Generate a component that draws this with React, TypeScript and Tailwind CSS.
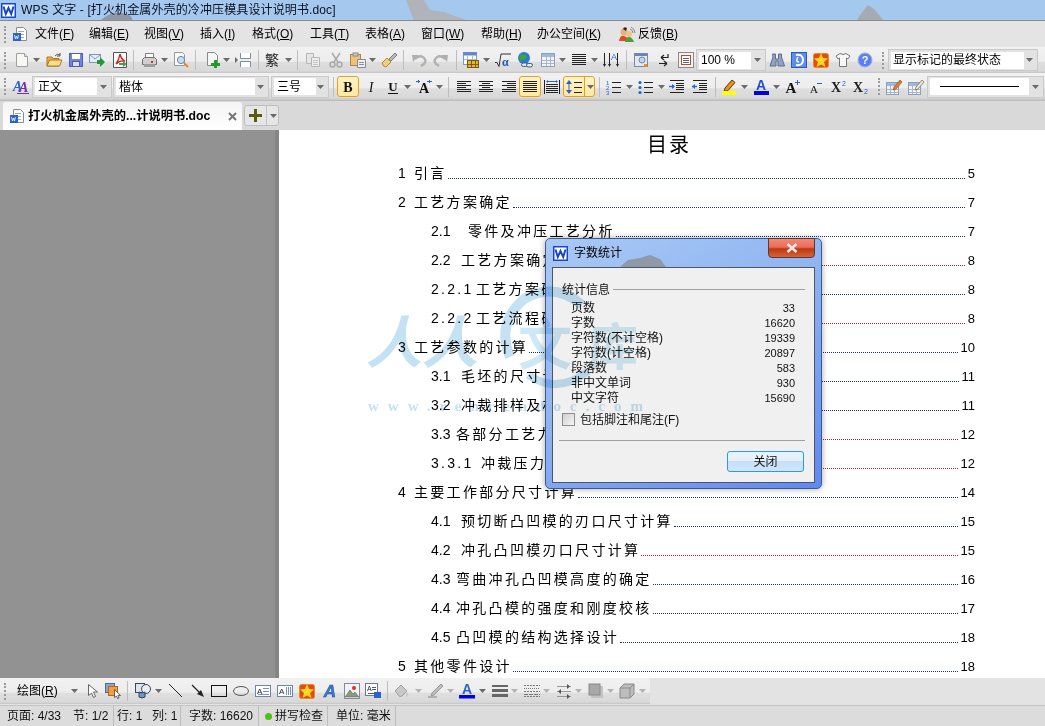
import React from "react";

type SvgProps = { className?: string; w?: number; h?: number; children?: React.ReactNode };

const Svg = ({ className = "", w = 16, h = 16, children }: SvgProps) => (
  <svg width={w} height={h} viewBox={`0 0 ${w} ${h}`} className={`shrink-0 block overflow-visible ${className}`}>
    {children}
  </svg>
);

type IconProps = { className?: string };

const Arrow = ({ className = "" }: IconProps) => (
  <Svg w={7} h={4} className={className}>
    <polygon points="0,0 7,0 3.5,4" fill="#6b6b6b" />
  </Svg>
);
const ArrowOff = ({ className = "" }: IconProps) => (
  <Svg w={7} h={4} className={className}>
    <polygon points="0,0 7,0 3.5,4" fill="#b4b4b4" />
  </Svg>
);
const Grip = ({ className = "" }: IconProps) => (
  <div className={`w-[2px] h-[17px] shrink-0 border-l-2 border-dotted border-[#9a9a9a] ${className}`} />
);
const Sep = ({ className = "" }: IconProps) => (
  <div className={`w-px h-[20px] shrink-0 bg-[#bdbdbd] ${className}`} />
);

const WpsLogo = ({ className = "" }: IconProps) => (
  <Svg w={15} h={15} className={className}>
    <rect x="0" y="0" width="15" height="15" fill="#1848c8" />
    <rect x="1.5" y="1.5" width="12" height="12" fill="#fff" />
    <polyline points="2.5,3.5 4.8,11 7.5,5 10.2,11 12.5,3.5" fill="none" stroke="#1848c8" strokeWidth="2" />
  </Svg>
);

const DocBlue = ({ className = "" }: IconProps) => (
  <Svg className={className}>
    <path d="M4.5 1.5h7l3 3v10h-10z" fill="#fff" stroke="#8c8c8c" />
    <path d="M6 5.5h6M6 8.5h6M6 11.5h6" stroke="#9aa8c0" />
    <rect x="1" y="7" width="8" height="8" fill="#2a62d0" />
    <path d="M2.5 9l1 4 1-3 1 3 1-4" stroke="#fff" fill="none" strokeWidth="0.8" />
  </Svg>
);
const IconNew = ({ className = "" }: IconProps) => (
  <Svg className={className}>
    <path d="M2.5 1.5h8l3 3v10h-11z" fill="#f6f6f2" stroke="#a0a0a0" />
    <path d="M10.5 1.5v3h3" fill="#ddd" stroke="#a0a0a0" />
  </Svg>
);
const IconOpen = ({ className = "" }: IconProps) => (
  <Svg className={className}>
    <path d="M1 5h5l1 1.5h6V14H1z" fill="#e9b14c" stroke="#a87a24" />
    <path d="M3.5 8H16l-2.5 6H1z" fill="#fbdc8c" stroke="#a87a24" />
    <path d="M9 4q2-3 5-1" stroke="#555" fill="none" />
    <path d="M14 1v3h-3" stroke="#555" fill="none" />
  </Svg>
);
const IconSave = ({ className = "" }: IconProps) => (
  <Svg className={className}>
    <rect x="1.5" y="1.5" width="13" height="13" fill="#6f86d8" stroke="#4a5fb0" />
    <rect x="4" y="2" width="8" height="5" fill="#fff" />
    <rect x="4.5" y="9.5" width="7" height="5" fill="#d8dcea" stroke="#4a5fb0" />
  </Svg>
);
const IconMail = ({ className = "" }: IconProps) => (
  <Svg className={className}>
    <rect x="0.5" y="2.5" width="11" height="8" fill="#e6eefa" stroke="#7f96c0" />
    <path d="M1 3l5 4 5-4" fill="none" stroke="#7f96c0" />
    <polygon points="8,8 11,8 11,5 16,10 11,15 11,12 8,12" fill="#1f9a2c" />
  </Svg>
);
const IconPdf = ({ className = "" }: IconProps) => (
  <Svg className={className}>
    <path d="M1.5 0.5h13v15h-13z" fill="#fff" stroke="#555" />
    <path d="M8 2q1 5 5 7-5-1-9 3 3-4 4-10z" fill="none" stroke="#d81818" strokeWidth="1.3" />
    <polygon points="7,11 11,11 11,9 15,12 11,15 11,13 7,13" fill="#40a050" />
  </Svg>
);
const IconPrint = ({ className = "" }: IconProps) => (
  <Svg className={className}>
    <path d="M4.5 1.5h8v5h-8z" fill="#fff" stroke="#808080" />
    <path d="M1.5 7.5l2-2h10l2 2v5h-14z" fill="#cfcfcf" stroke="#707070" />
    <rect x="3" y="12" width="11" height="3" fill="#9c9c9c" />
    <rect x="10" y="9" width="2" height="2" fill="#d03030" />
  </Svg>
);
const IconPreview = ({ className = "" }: IconProps) => (
  <Svg className={className}>
    <path d="M1.5 0.5h8l2 2v11h-10z" fill="#fafafa" stroke="#9a9a9a" />
    <circle cx="8" cy="8" r="3.6" fill="#c4e0f4" stroke="#6a88a8" />
    <path d="M11 11l4 4" stroke="#d89018" strokeWidth="2" />
  </Svg>
);
const IconNewPlus = ({ className = "" }: IconProps) => (
  <Svg className={className}>
    <path d="M2.5 0.5h7l3 3v10h-10z" fill="#f6f6f2" stroke="#8a8a8a" />
    <path d="M9 8h3v3h3v3h-3v2H9v-2H6v-3h3z" fill="#1f9a2c" />
  </Svg>
);
const IconSplit = ({ className = "" }: IconProps) => (
  <Svg className={className}>
    <path d="M5.5 1v5.500h10V1M5.5 15v-5.500h10V15" fill="#fff" stroke="#7a8ea8" />
    <polygon points="0,5 3,8 0,11" fill="#666" />
  </Svg>
);
const IconCopy = ({ className = "" }: IconProps) => (
  <Svg className={className}>
    <path d="M1.5 1.5h7v10h-7z" fill="#e6e6e6" stroke="#b6b6b6" />
    <path d="M6.5 5.5h8v9h-8z" fill="#eee" stroke="#b6b6b6" />
    <path d="M8 8.500h5M8 10.500h5M8 12.500h5" stroke="#c4c4c4" />
  </Svg>
);
const IconCut = ({ className = "" }: IconProps) => (
  <Svg className={className}>
    <path d="M4 1l6 9M12 1L6 10" stroke="#a8a8a8" strokeWidth="1.5" />
    <circle cx="4.5" cy="12.5" r="2.5" fill="none" stroke="#a8a8a8" strokeWidth="1.4" />
    <circle cx="11.5" cy="12.5" r="2.5" fill="none" stroke="#a8a8a8" strokeWidth="1.4" />
  </Svg>
);
const IconPaste = ({ className = "" }: IconProps) => (
  <Svg className={className}>
    <rect x="0.5" y="2.5" width="10" height="11" fill="#eec27a" stroke="#a88850" />
    <rect x="3" y="1" width="5" height="3" fill="#ccc" stroke="#888" />
    <path d="M7.5 7.5h8v8h-8z" fill="#eee" stroke="#8a8a8a" />
    <path d="M9 10.500h5M9 12.500h5" stroke="#7a90b8" />
  </Svg>
);
const IconBrush = ({ className = "" }: IconProps) => (
  <Svg className={className}>
    <path d="M1 11l5-5 4 4-5 5q-3 0-4-4z" fill="#f0cf80" stroke="#b08a40" />
    <path d="M8 7l6-6 2 2-6 6z" fill="#b8b8b8" stroke="#808080" />
  </Svg>
);
const IconUndo = ({ className = "" }: IconProps) => (
  <Svg className={className}>
    <path d="M4 7q5-5 9-1t-3 8" fill="none" stroke="#b0b0b0" strokeWidth="2.4" />
    <polygon points="1,3 8,3 2,10" fill="#b0b0b0" />
  </Svg>
);
const IconRedo = ({ className = "" }: IconProps) => (
  <Svg className={className}>
    <path d="M12 7q-5-5-9-1t3 8" fill="none" stroke="#b0b0b0" strokeWidth="2.4" />
    <polygon points="15,3 8,3 14,10" fill="#b0b0b0" />
  </Svg>
);
const IconTableY = ({ className = "" }: IconProps) => (
  <Svg w={16} h={16} className={className}>
    <rect x="0.5" y="0.5" width="13" height="12" fill="#fff" stroke="#7898c8" />
    <rect x="0.5" y="0.5" width="13" height="3" fill="#5f86c8" />
    <path d="M4.5 4v8M9.500 4v8M1 7.500h12" stroke="#a8bcd8" />
    <rect x="4.5" y="8.5" width="11" height="7" fill="#e8b820" stroke="#7a5a10" />
    <path d="M8.500 9v6M12.500 9v6M5 12.500h10" stroke="#7a5a10" />
  </Svg>
);
const IconSqrt = ({ className = "" }: IconProps) => (
  <Svg className={className}>
    <path d="M0 10.500h2l2 4 2-12.500h10" fill="none" stroke="#333" />
    <text x="7" y="14" fontSize="12" fontWeight="700" fill="#1e5ab0" fontFamily="Liberation Serif">α</text>
  </Svg>
);
const IconGlobe = ({ className = "" }: IconProps) => (
  <Svg className={className}>
    <circle cx="7" cy="6" r="6" fill="#2f78d0" />
    <path d="M3 2q3 2 5 0l2 3-3 3-2-1-1 3-2-4z" fill="#38a838" />
    <rect x="4.5" y="11" width="6" height="3.4" rx="1.7" fill="#e8eef8" stroke="#3a5a90" />
    <rect x="9.5" y="11.5" width="6" height="3.4" rx="1.7" fill="#e8eef8" stroke="#3a5a90" />
  </Svg>
);
const IconTable = ({ className = "" }: IconProps) => (
  <Svg className={className}>
    <rect x="1.5" y="1.5" width="13" height="13" fill="#f4f4f4" stroke="#8aa0c0" />
    <rect x="2" y="2" width="12" height="3" fill="#a0b8dc" />
    <path d="M6.500 2v12M10.500 2v12M2 8.500h12M2 11.500h12" stroke="#a8b4c8" />
  </Svg>
);
const IconCols = ({ className = "" }: IconProps) => (
  <Svg className={className}>
    <path d="M1 2.500h14M1 4.500h14M1 6.500h14M1 8.500h14M1 10.500h14M1 12.500h14" stroke="#222" />
  </Svg>
);
const IconDist = ({ className = "" }: IconProps) => (
  <Svg className={className}>
    <path d="M1.500 1v12M6.500 1v12M14.500 1v12" stroke="#222" />
    <polygon points="0,12 3,12 1.5,15" fill="#222" />
    <polygon points="5,12 8,12 6.5,15" fill="#222" />
    <polygon points="13,12 16,12 14.5,15" fill="#222" />
    <text x="8" y="8" fontSize="9" fill="#2a62d0" fontFamily="Liberation Sans">A</text>
  </Svg>
);
const IconReview = ({ className = "" }: IconProps) => (
  <Svg className={className}>
    <rect x="1.5" y="1.5" width="13" height="13" fill="#e4e8f0" stroke="#7a8aa0" />
    <rect x="2" y="2" width="12" height="2" fill="#5f86c8" />
    <circle cx="9" cy="8" r="3" fill="#bcd4ec" stroke="#7a8aa0" />
    <rect x="11" y="12" width="3" height="3" fill="#e89018" />
  </Svg>
);
const IconEnter = ({ className = "" }: IconProps) => (
  <Svg className={className}>
    <path d="M12 2v3.500H5M5 5.500l3-2.500M5 5.500l3 2.500M3 11.500h8M11 11.500l-3-2.500M11 11.500l-3 2.500" fill="none" stroke="#222" strokeWidth="1.2" />
  </Svg>
);
const IconFrame = ({ className = "" }: IconProps) => (
  <Svg className={className}>
    <rect x="0.5" y="0.5" width="15" height="15" fill="#f2f2f2" stroke="#8a8a8a" />
    <rect x="3.5" y="3.5" width="9" height="9" fill="#fff" stroke="#b05030" />
    <path d="M5 6.500h6M5 8.500h6M5 10.500h6" stroke="#666" />
  </Svg>
);
const IconBinoc = ({ className = "" }: IconProps) => (
  <Svg className={className}>
    <path d="M3.5 2h3v5h3V2h3v3l3 9H9V9H7v5H1l3-9z" fill="#8ea4c4" stroke="#5f6f8a" />
  </Svg>
);
const IconBlue = ({ className = "" }: IconProps) => (
  <Svg className={className}>
    <rect x="0.5" y="0.5" width="15" height="15" fill="#5f8ee8" stroke="#2a5ac0" />
    <path d="M5 3q7-1 7 5t-7 5" fill="none" stroke="#fff" strokeWidth="2" />
    <path d="M7 5q-3 5 1 5" fill="none" stroke="#fff" strokeWidth="1.4" />
  </Svg>
);
const IconStar = ({ className = "" }: IconProps) => (
  <Svg className={className}>
    <rect x="0.5" y="1.5" width="15" height="14" rx="2" fill="#e84818" stroke="#e09020" />
    <polygon points="8,1 10,6 15,6.5 11,10 12.5,15 8,12.5 3.5,15 5,10 1,6.5 6,6" fill="#ffd820" />
  </Svg>
);
const IconShirt = ({ className = "" }: IconProps) => (
  <Svg className={className}>
    <path d="M5 1.5L1 4l2 3 1.5-1v8.5h7V6L13 7l2-3-4-2.500q-3 2-6 0z" fill="#f8f8f8" stroke="#777" />
  </Svg>
);
const IconHelp = ({ className = "" }: IconProps) => (
  <Svg className={className}>
    <circle cx="8" cy="8" r="7" fill="#5b7ef0" stroke="#9ab0f0" />
    <text x="8" y="12" fontSize="11" fontWeight="700" textAnchor="middle" fill="#fff" fontFamily="Liberation Sans">?</text>
  </Svg>
);

const IconStyle = ({ className = "" }: IconProps) => (
  <Svg className={className}>
    <text x="0" y="12" fontSize="14" fontStyle="italic" fontWeight="700" fill="#2a62d0" fontFamily="Liberation Serif">A</text>
    <text x="6" y="13" fontSize="14" fontStyle="italic" fontWeight="700" fill="#7030a0" fontFamily="Liberation Serif">A</text>
    <rect x="4" y="14" width="12" height="1" fill="#7030a0" />
  </Svg>
);
const Letter = ({ className = "", ch, italic, bold }: IconProps & { ch: string; italic?: boolean; bold?: boolean }) => (
  <Svg className={className}>
    <text x="8" y="13" fontSize="14" textAnchor="middle" fontWeight={bold ? 700 : 400} fontStyle={italic ? "italic" : "normal"} fill="#111" fontFamily="Liberation Serif">{ch}</text>
  </Svg>
);
const IconU = ({ className = "" }: IconProps) => (
  <Svg className={className}>
    <text x="8" y="12" fontSize="13" textAnchor="middle" fontWeight="700" fill="#111" fontFamily="Liberation Serif">U</text>
    <rect x="3" y="14" width="10" height="1" fill="#111" />
  </Svg>
);
const IconAHeight = ({ className = "" }: IconProps) => (
  <Svg className={className}>
    <text x="8" y="14" fontSize="14" textAnchor="middle" fontWeight="700" fill="#111" fontFamily="Liberation Serif">A</text>
    <path d="M0 2.500h4M11 2.500h5" stroke="#2a62d0" />
    <path d="M2.500 1v3M13.500 1v3" stroke="#2a62d0" />
  </Svg>
);
const Lines = ({ className = "", rows }: IconProps & { rows: [number, number][] }) => (
  <Svg className={className}>
    {rows.map(([x, w], i) => (
      <rect key={i} x={x} y={2 + i * 2} width={w} height={1} fill="#222" />
    ))}
  </Svg>
);
const left: [number, number][] = [[1, 14], [1, 9], [1, 14], [1, 9], [1, 14], [1, 14]];
const center: [number, number][] = [[1, 14], [4, 8], [1, 14], [4, 8], [1, 14], [1, 14]];
const right: [number, number][] = [[1, 14], [6, 9], [1, 14], [6, 9], [1, 14], [1, 14]];
const full: [number, number][] = [[1, 14], [1, 14], [1, 14], [1, 14], [1, 14], [1, 14]];

const IconDistH = ({ className = "" }: IconProps) => (
  <Svg className={className}>
    <path d="M0.500 1v14M15.500 1v14" stroke="#222" />
    <path d="M2 2.500l2-1.500v3zM14 2.500l-2-1.500v3z" fill="#2a62d0" />
    <path d="M4 2.500h8" stroke="#2a62d0" />
    <path d="M2 5.500h12M2 7.500h12M2 9.500h12M2 11.500h12M2 13.500h12" stroke="#222" />
  </Svg>
);
const IconSpacing = ({ className = "" }: IconProps) => (
  <Svg className={className}>
    <path d="M3 2v12" stroke="#2a62d0" />
    <polygon points="0,5 6,5 3,1" fill="#2a62d0" />
    <polygon points="0,11 6,11 3,15" fill="#2a62d0" />
    <path d="M8 3.500h8M8 8.500h8M8 13.500h8" stroke="#222" />
  </Svg>
);
const IconList = ({ className = "" }: IconProps) => (
  <Svg className={className}>
    <text x="0" y="6" fontSize="6" fill="#2a62d0" fontFamily="Liberation Sans">1</text>
    <text x="0" y="11" fontSize="6" fill="#2a62d0" fontFamily="Liberation Sans">2</text>
    <text x="0" y="16" fontSize="6" fill="#2a62d0" fontFamily="Liberation Sans">3</text>
    <path d="M6 3.500h9M6 8.500h9M6 13.500h9" stroke="#222" />
  </Svg>
);
const IconBullets = ({ className = "" }: IconProps) => (
  <Svg className={className}>
    <circle cx="2" cy="3.500" r="1.6" fill="#2a62d0" />
    <circle cx="2" cy="8.500" r="1.6" fill="#2a62d0" />
    <circle cx="2" cy="13.500" r="1.6" fill="#2a62d0" />
    <path d="M6 3.500h9M6 8.500h9M6 13.500h9" stroke="#222" />
  </Svg>
);
const IconIndent = ({ className = "", flip }: IconProps & { flip?: boolean }) => (
  <Svg className={className}>
    <path d="M1 1.500h14M7 4.500h8M7 6.500h8M7 8.500h8M7 10.500h8M1 13.500h14" stroke="#222" />
    <path d="M0 7.500h5" stroke="#2a62d0" strokeWidth="1.4" />
    {flip ? <polygon points="6,7.500 3,5 3,10" fill="#2a62d0" /> : <polygon points="0,7.500 3,5 3,10" fill="#2a62d0" />}
  </Svg>
);
const IconHighlight = ({ className = "" }: IconProps) => (
  <Svg className={className}>
    <path d="M4 9l7-8 3 2.500-7 8-4 1z" fill="#e89018" stroke="#603808" />
    <rect x="1" y="12" width="14" height="4" fill="#ffff00" />
  </Svg>
);
const IconAColor = ({ className = "" }: IconProps) => (
  <Svg className={className}>
    <text x="8" y="11" fontSize="14" textAnchor="middle" fontWeight="700" fill="#1e50d0" fontFamily="Liberation Sans">A</text>
    <rect x="1" y="12" width="15" height="4" fill="#0000e0" />
  </Svg>
);
const IconAGrow = ({ className = "", up }: IconProps & { up?: boolean }) => (
  <Svg className={className}>
    <text x="6" y="14" fontSize={up ? 15 : 11} textAnchor="middle" fontWeight={up ? 700 : 400} fill="#111" fontFamily="Liberation Serif">A</text>
    <path d={up ? "M10 3.500h5M12.500 1v5" : "M9 4.500h5"} stroke="#2a62d0" />
  </Svg>
);
const IconX = ({ className = "", sub }: IconProps & { sub?: boolean }) => (
  <Svg className={className}>
    <text x="6" y="13" fontSize="14" textAnchor="middle" fontWeight="700" fill="#222" fontFamily="Liberation Serif">X</text>
    <text x="12" y={sub ? 15 : 7} fontSize="7" fill="#2a62d0" fontFamily="Liberation Sans">2</text>
  </Svg>
);
const IconEditTable = ({ className = "", pen }: IconProps & { pen?: string }) => (
  <Svg className={className}>
    <rect x="0.5" y="3.5" width="12" height="12" fill="#f4f4f4" stroke="#8aa0c0" />
    <rect x="1" y="4" width="11" height="3" fill="#a0b8dc" />
    <path d="M4.500 4v11M8.500 4v11M1 10.500h11M1 13.500h11" stroke="#a8b4c8" />
    <path d="M8 8l6-7 2 2-6 7-3 1z" fill={pen} stroke="#806030" strokeWidth="0.7" />
  </Svg>
);

const IconCursor = ({ className = "" }: IconProps) => (
  <Svg className={className}>
    <path d="M4.500 1.500v11l3-2.500 2 4.500 2-1-2-4.500h4z" fill="#fff" stroke="#666" />
  </Svg>
);
const IconSelect = ({ className = "" }: IconProps) => (
  <Svg className={className}>
    <rect x="0.500" y="0.500" width="9" height="9" fill="#8ea4c4" stroke="#5a6a8a" />
    <rect x="3.500" y="3.500" width="9" height="9" fill="#f0a040" stroke="#a86a20" />
    <path d="M9.500 6.500v8l2-1.500 1 2.500 1.500-.5-1-2.500h2.500z" fill="#fff" stroke="#444" strokeWidth="0.8" />
  </Svg>
);
const IconShapes = ({ className = "" }: IconProps) => (
  <Svg className={className}>
    <rect x="0.500" y="0.500" width="9" height="9" fill="#dce4f0" stroke="#445" />
    <circle cx="11" cy="6" r="4.500" fill="#eaeef4" stroke="#445" />
    <path d="M4 9v5q3 2 6 0V9q-3 2-6 0z" fill="#6a96d8" stroke="#345" />
  </Svg>
);
const IconLine = ({ className = "" }: IconProps) => (
  <Svg className={className}>
    <path d="M2 1l13 13" stroke="#222" />
  </Svg>
);
const IconArrowLine = ({ className = "" }: IconProps) => (
  <Svg className={className}>
    <path d="M2 2l9 9" stroke="#222" strokeWidth="1.2" />
    <polygon points="14,14 7,11 11,7" fill="#222" />
  </Svg>
);
const IconRect = ({ className = "" }: IconProps) => (
  <Svg className={className}>
    <rect x="0.500" y="2.500" width="15" height="11" fill="none" stroke="#111" />
  </Svg>
);
const IconOval = ({ className = "" }: IconProps) => (
  <Svg className={className}>
    <ellipse cx="8" cy="8" rx="7.500" ry="4.500" fill="none" stroke="#555" />
  </Svg>
);
const IconTextBox = ({ className = "", bars }: IconProps & { bars?: boolean }) => (
  <Svg className={className}>
    <rect x="0.500" y="2.500" width="15" height="11" fill="#fff" stroke="#6a86b0" />
    <text x="2" y="11" fontSize="8" fill="#222" fontFamily="Liberation Sans">A</text>
    {bars ? (
      <path d="M9.500 4v8M11.500 4v8M13.500 4v8" stroke="#7a90b8" />
    ) : (
      <path d="M8 5.500h6M8 8.500h6M3 11.500h11" stroke="#7a90b8" />
    )}
  </Svg>
);
const IconWordArt = ({ className = "" }: IconProps) => (
  <Svg className={className}>
    <text x="8" y="14" fontSize="17" fontStyle="italic" textAnchor="middle" fontWeight="700" fill="#3a78d8" stroke="#1e4a98" strokeWidth="0.5" fontFamily="Liberation Sans">A</text>
  </Svg>
);
const IconPic = ({ className = "" }: IconProps) => (
  <Svg className={className}>
    <rect x="0.500" y="0.500" width="15" height="15" fill="#f0f4fa" stroke="#889" />
    <circle cx="10" cy="5" r="2" fill="#e03020" />
    <path d="M1 14l5-7 3 4 2-2 4 5z" fill="#8a9a78" stroke="#556" strokeWidth="0.5" />
  </Svg>
);
const IconClip = ({ className = "" }: IconProps) => (
  <Svg className={className}>
    <rect x="0.500" y="0.500" width="12" height="12" fill="#fff" stroke="#6a7a98" />
    <text x="2" y="8" fontSize="7" fill="#222" fontFamily="Liberation Sans">A</text>
    <path d="M7 4.500h4M7 6.500h4M3 10.500h8" stroke="#556" />
    <rect x="9" y="9" width="7" height="6" fill="#2a62d0" />
  </Svg>
);
const IconFill = ({ className = "" }: IconProps) => (
  <Svg className={className}>
    <path d="M2 8l6-6 6 6-5 5q-2 1-3 0z" fill="#c8c8c8" stroke="#a0a0a0" />
    <path d="M14 9q2 3 0 5-2-2 0-5z" fill="#c8c8c8" />
  </Svg>
);
const IconPen = ({ className = "" }: IconProps) => (
  <Svg className={className}>
    <path d="M5 10l9-9 2 2-9 9-3 1z" fill="#bdbdbd" stroke="#9a9a9a" />
    <path d="M1 14h9" stroke="#b0b0b0" strokeWidth="2" />
  </Svg>
);
const IconALine = ({ className = "" }: IconProps) => (
  <Svg className={className}>
    <text x="8" y="11" fontSize="14" textAnchor="middle" fontWeight="700" fill="#2a62d0" fontFamily="Liberation Sans">A</text>
    <rect x="0" y="12" width="16" height="3.500" fill="#0000e0" />
  </Svg>
);
const IconLineStyle = ({ className = "" }: IconProps) => (
  <Svg className={className}>
    <rect x="0" y="2" width="16" height="2" fill="#666" />
    <rect x="0" y="6" width="16" height="3" fill="#666" />
    <rect x="0" y="11" width="16" height="3" fill="#666" />
  </Svg>
);
const IconDash = ({ className = "" }: IconProps) => (
  <Svg className={className}>
    <path d="M0 2.500h16M0 8.500h16M0 13.500h16" stroke="#777" strokeDasharray="2 1" />
    <path d="M0 5.500h16" stroke="#777" strokeDasharray="1 1" />
    <path d="M0 11.500h16" stroke="#777" strokeDasharray="4 1" />
  </Svg>
);
const IconArrows = ({ className = "" }: IconProps) => (
  <Svg className={className}>
    <path d="M1 3.500h14M1 8.500h14M1 13.500h14" stroke="#999" />
    <polygon points="11,1 14,3.500 11,6" fill="#555" />
    <polygon points="5,6 2,8.500 5,11" fill="#555" />
    <polygon points="11,11 14,13.500 11,16" fill="#555" />
  </Svg>
);
const IconShadow = ({ className = "" }: IconProps) => (
  <Svg className={className}>
    <rect x="3" y="3" width="12" height="12" fill="#c4c4c4" />
    <rect x="1" y="1" width="11" height="11" fill="#a8a8a8" stroke="#8a8a8a" />
  </Svg>
);
const Icon3d = ({ className = "" }: IconProps) => (
  <Svg className={className}>
    <path d="M1 5l4-4h10v10l-4 4H1z" fill="#bdbdbd" stroke="#8a8a8a" />
    <path d="M1 5h10v10M11 5l4-4" fill="none" stroke="#8a8a8a" />
  </Svg>
);

const Combo = ({ className = "", inner, children }: IconProps & { inner: string; children?: React.ReactNode }) => (
  <div className={`shrink-0 h-[22px] border border-[#c9c9c9] bg-[#e2e2e2] flex items-center ${className}`}>
    <div className={`h-[17px] ml-[2px] bg-white flex items-center overflow-hidden whitespace-nowrap text-[12px] text-black ${inner}`}>
      {children}
    </div>
    <Arrow className="ml-auto mr-[4px]" />
  </div>
);

const barBg =
  "bg-[linear-gradient(#f1f1f1_0%,#ededed_55%,#dedede_58%,#d9d9d9_92%,#c4c4c4_100%)]";

const menus = [
  { label: "文件", key: "F", cls: "w-[54px]" },
  { label: "编辑", key: "E", cls: "w-[55px]" },
  { label: "视图", key: "V", cls: "w-[56px]" },
  { label: "插入", key: "I", cls: "w-[52px]" },
  { label: "格式", key: "O", cls: "w-[58px]" },
  { label: "工具", key: "T", cls: "w-[55px]" },
  { label: "表格", key: "A", cls: "w-[56px]" },
  { label: "窗口", key: "W", cls: "w-[60px]" },
  { label: "帮助", key: "H", cls: "w-[56px]" },
  { label: "办公空间", key: "K", cls: "w-[83px]" },
];

const blue = "border-[#1e2f70]";
const red = "border-[#b02020]";
const wide = "tracking-[2.300px]";
const narrow = "tracking-normal";

const toc = [
  { num: "1", text: "引言", page: "5", sub: false, numCls: "w-[16px]", track: narrow, line: blue },
  { num: "2", text: "工艺方案确定", page: "7", sub: false, numCls: "w-[16px]", track: narrow, line: blue },
  { num: "2.1", text: "零件及冲压工艺分析", page: "7", sub: true, numCls: "w-[37px]", track: narrow, line: blue },
  { num: "2.2", text: "工艺方案确定", page: "8", sub: true, numCls: "w-[30px]", track: narrow, line: red },
  { num: "2.2.1", text: "工艺方案确定", page: "8", sub: true, numCls: "w-[45px]", track: wide, line: blue },
  { num: "2.2.2", text: "工艺流程确定", page: "8", sub: true, numCls: "w-[45px]", track: wide, line: red },
  { num: "3", text: "工艺参数的计算", page: "10", sub: false, numCls: "w-[16px]", track: narrow, line: blue },
  { num: "3.1", text: "毛坯的尺寸计算", page: "11", sub: true, numCls: "w-[30px]", track: narrow, line: blue },
  { num: "3.2", text: "冲裁排样及材料利用率", page: "11", sub: true, numCls: "w-[30px]", track: narrow, line: blue },
  { num: "3.3", text: "各部分工艺力的计算", page: "12", sub: true, numCls: "w-[25px]", track: narrow, line: red },
  { num: "3.3.1", text: "冲裁压力的计算", page: "12", sub: true, numCls: "w-[50px]", track: wide, line: red },
  { num: "4", text: "主要工作部分尺寸计算", page: "14", sub: false, numCls: "w-[16px]", track: narrow, line: blue },
  { num: "4.1", text: "预切断凸凹模的刃口尺寸计算", page: "15", sub: true, numCls: "w-[30px]", track: narrow, line: blue },
  { num: "4.2", text: "冲孔凸凹模刃口尺寸计算", page: "15", sub: true, numCls: "w-[30px]", track: narrow, line: red },
  { num: "4.3", text: "弯曲冲孔凸凹模高度的确定", page: "16", sub: true, numCls: "w-[25px]", track: narrow, line: blue },
  { num: "4.4", text: "冲孔凸模的强度和刚度校核", page: "17", sub: true, numCls: "w-[25px]", track: narrow, line: blue },
  { num: "4.5", text: "凸凹模的结构选择设计", page: "18", sub: true, numCls: "w-[25px]", track: narrow, line: blue },
  { num: "5", text: "其他零件设计", page: "18", sub: false, numCls: "w-[16px]", track: narrow, line: blue },
];

const stats = [
  ["页数", "33"],
  ["字数", "16620"],
  ["字符数(不计空格)", "19339"],
  ["字符数(计空格)", "20897"],
  ["段落数", "583"],
  ["非中文单词", "930"],
  ["中文字符", "15690"],
];

const WordCountDialog = () => (
  <div className="absolute left-[545px] top-[238px] w-[277px] h-[251px] rounded-[5px] border border-[#3c5a8e] bg-[linear-gradient(150deg,#a9c9f5_0%,#8fb4f2_45%,#5f88f2_100%)] flex flex-col shadow-[0_0_6px_rgba(0,0,0,0.35)]">
    <div className="h-[28px] shrink-0 flex items-center pl-[7px] relative">
      <WpsLogo />
      <span className="ml-[6px] text-[12px] text-black">字数统计</span>
      <svg width="46" height="12" viewBox="0 0 46 12" className="absolute left-[74px] bottom-0">
        <path d="M0 12l8-7 12-2 10-3 10 4 6 8z" fill="#8f99a8" />
      </svg>
      <div className="absolute right-[6px] -top-px w-[47px] h-[20px] rounded-b-[4px] border border-[#5a3a34] bg-[linear-gradient(#f08a78_0%,#ee6a58_45%,#b83a10_55%,#d8623a_100%)] flex items-center justify-center">
        <svg width="12" height="10" viewBox="0 0 12 10">
          <path d="M1.500 1l9 8M10.500 1l-9 8" stroke="#e8e8e8" strokeWidth="2.600" />
        </svg>
      </div>
    </div>
    <div className="ml-[6px] w-[263px] h-[216px] shrink-0 border border-[#50565e] bg-[#f0f0f0] pl-[9px] pt-[14px] flex flex-col text-[12px] text-[#111]">
      <div className="flex items-center h-[15px]">
        <span>统计信息</span>
        <div className="ml-[3px] w-[192px] h-px bg-[#a0a0a0]" />
      </div>
      <div className="mt-[4px] pl-[9px] w-[233px] flex flex-col">
        {stats.map(([k, v]) => (
          <div key={k} className="h-[15px] flex items-center justify-between leading-[15px]">
            <span>{k}</span>
            <span className="text-[11px]">{v}</span>
          </div>
        ))}
      </div>
      <div className="mt-[7px] flex items-center h-[13px]">
        <div className="w-[13px] h-[13px] border border-[#8e8e8e] bg-[linear-gradient(135deg,#d0d0d0,#f6f6f6)]" />
        <span className="ml-[5px]">包括脚注和尾注(F)</span>
      </div>
      <div className="mt-[14px] -ml-[3px] w-[246px] h-px bg-[#a0a0a0]" />
      <div className="mt-[10px] ml-[165px] w-[77px] h-[21px] rounded-[3px] border border-[#2c9ae0] bg-[linear-gradient(#e8f2fb_0%,#e4f0fa_45%,#c4e0f8_50%,#cfe6fa_100%)] flex items-center justify-center text-[12px]">
        关闭
      </div>
    </div>
  </div>
);

const Watermark = () => (
  <svg
    width="340"
    height="140"
    viewBox="0 0 340 140"
    className="absolute left-[360px] top-[283px] pointer-events-none mix-blend-multiply"
  >
    <text x="6" y="80" fontSize="56" fontStyle="italic" fontWeight="700" fill="#c4e2f3" className="font-['Noto_Sans_CJK_SC',sans-serif]">人人</text>
    <path d="M150 74q-14-34 14-58 30-18 58 6" fill="none" stroke="#c4e2f3" strokeWidth="10" />
    <path d="M168 92q30 20 60-4" fill="none" stroke="#c4e2f3" strokeWidth="8" />
    <text x="158" y="82" fontSize="54" fontWeight="700" fill="#cfe8f5" className="font-['Noto_Sans_CJK_SC',sans-serif]">文</text>
    <text x="228" y="82" fontSize="50" fontWeight="700" fill="#d4ebf6" className="font-['Noto_Sans_CJK_SC',sans-serif]">库</text>
    <text x="8" y="128" fontSize="15" fontWeight="700" letterSpacing="9" fill="#c4e2f3" className="font-['Liberation_Serif',serif]">www.renrendoc.com</text>
  </svg>
);

export default function App() {
  return (
    <div className="relative w-[1045px] h-[726px] overflow-hidden flex flex-col bg-[#e3e3e3] font-['Liberation_Sans','Noto_Sans_CJK_SC',sans-serif] text-[12px] text-black">
      {/* title bar */}
      <div className="relative h-[21px] shrink-0 bg-[#a5c8ee] flex items-center pl-[1px] border-b border-[#8a8a8a] overflow-hidden">
        <svg width="1045" height="21" viewBox="0 0 1045 21" className="absolute left-0 top-0">
          <path d="M406 0h18l6 10 14 2 22 8 4 1h-56z" fill="#b0b4ba" />
          <path d="M858 18l5-7 5-6 6 4 6 7 4 5h-26z" fill="#a6abb2" />
          <path d="M100 21q10-10 22-8t10 8z" fill="#8e98a8" />
        </svg>
        <WpsLogo className="relative" />
        <span className="relative ml-[5px] text-[12px] tracking-[0.12px] text-[#0b1020] whitespace-nowrap">
          WPS 文字 - [打火机金属外壳的冷冲压模具设计说明书.doc]
        </span>
      </div>

      {/* menu bar */}
      <div className="h-[26px] shrink-0 flex items-center bg-[#e4e4e4]">
        <Grip className="ml-[4px]" />
        <DocBlue className="ml-[6px]" />
        <div className="ml-[7px] flex items-center">
          {menus.map((m) => (
            <div key={m.key} className={`${m.cls} whitespace-nowrap text-[12px]`}>
              {m.label}(<span className="underline">{m.key}</span>)
            </div>
          ))}
          <svg width="17" height="16" viewBox="0 0 17 16" className="shrink-0 -ml-px">
            <circle cx="5" cy="6" r="3.500" fill="#e8b080" />
            <path d="M4 3q1-3 4-1l-1 3z" fill="#402010" />
            <path d="M0 15q1-6 5-5t5 5z" fill="#e04828" />
            <circle cx="10" cy="8" r="3" fill="#f0c090" />
            <path d="M6 16q1-5 4-5t5 5z" fill="#48a038" />
            <path d="M11 3q3 1 3 4M12 1q4 2 4 6" stroke="#888" fill="none" />
          </svg>
          <div className="ml-[2px] whitespace-nowrap">
            反馈(<span className="underline">B</span>)
          </div>
        </div>
      </div>

      {/* standard toolbar */}
      <div className={`h-[26px] shrink-0 flex items-center ${barBg}`}>
        <Grip className="ml-[4px]" />
        <IconNew className="ml-[8px]" />
        <Arrow className="ml-[3px]" />
        <IconOpen className="ml-[6px]" />
        <IconSave className="ml-[6px]" />
        <IconMail className="ml-[5px]" />
        <IconPdf className="ml-[7px]" />
        <Sep className="ml-[5px]" />
        <IconPrint className="ml-[7px]" />
        <Arrow className="ml-[4px]" />
        <IconPreview className="ml-[5px]" />
        <Sep className="ml-[6px]" />
        <IconNewPlus className="ml-[9px]" />
        <Arrow className="ml-[2px]" />
        <IconSplit className="ml-[5px]" />
        <Sep className="ml-[7px]" />
        <span className="ml-[6px] w-[14px] text-[14px] leading-none text-[#222]">繁</span>
        <Arrow className="ml-[6px]" />
        <Sep className="ml-[5px]" />
        <IconCopy className="ml-[7px]" />
        <IconCut className="ml-[7px]" />
        <IconPaste className="ml-[6px]" />
        <Arrow className="ml-[3px]" />
        <IconBrush className="ml-[5px]" />
        <Sep className="ml-[6px]" />
        <IconUndo className="ml-[7px]" />
        <IconRedo className="ml-[6px]" />
        <Sep className="ml-[7px]" />
        <IconTableY className="ml-[6px]" />
        <Arrow className="ml-[4px]" />
        <IconSqrt className="ml-[5px]" />
        <IconGlobe className="ml-[6px]" />
        <IconTable className="ml-[7px]" />
        <Arrow className="ml-[3px]" />
        <IconCols className="ml-[5px]" />
        <Arrow className="ml-[4px]" />
        <IconDist className="ml-[5px]" />
        <Sep className="ml-[7px]" />
        <IconReview className="ml-[6px]" />
        <IconEnter className="ml-[7px]" />
        <IconFrame className="ml-[6px]" />
        <Combo className="ml-[2px] w-[70px]" inner="w-[52px] pl-[2px]">
          100 %
        </Combo>
        <IconBinoc className="ml-[3px]" />
        <IconBlue className="ml-[6px]" />
        <IconStar className="ml-[6px]" />
        <IconShirt className="ml-[6px]" />
        <IconHelp className="ml-[6px]" />
        <Grip className="ml-[9px]" />
        <Combo className="ml-[4px] w-[150px]" inner="w-[133px] pl-[2px]">
          显示标记的最终状态
        </Combo>
      </div>

      {/* formatting toolbar */}
      <div className={`h-[27px] shrink-0 flex items-center ${barBg}`}>
        <Grip className="ml-[4px]" />
        <IconStyle className="ml-[7px]" />
        <Combo className="ml-[3px] w-[80px]" inner="w-[62px] pl-[3px]">
          正文
        </Combo>
        <Combo className="ml-px w-[156px]" inner="w-[139px] pl-[3px]">
          楷体
        </Combo>
        <Combo className="ml-[2px] w-[58px]" inner="w-[42px] pl-[3px]">
          三号
        </Combo>
        <Sep className="ml-[4px]" />
        <div className="ml-[3px] w-[22px] h-[21px] rounded-[3px] border border-[#e8a020] bg-[linear-gradient(#fff3c8,#ffe9a0)] flex items-center justify-center">
          <Letter ch="B" bold />
        </div>
        <Letter ch="I" italic className="ml-[4px]" />
        <IconU className="ml-[6px]" />
        <Arrow className="ml-[3px]" />
        <IconAHeight className="ml-[5px]" />
        <Arrow className="ml-[4px]" />
        <Sep className="ml-[5px]" />
        <Lines rows={left} className="ml-[7px]" />
        <Lines rows={center} className="ml-[6px]" />
        <Lines rows={right} className="ml-[7px]" />
        <div className="ml-[2px] w-[22px] h-[21px] rounded-[3px] border border-[#e8a020] bg-[linear-gradient(#fff3c8,#ffe9a0)] flex items-center justify-center">
          <Lines rows={full} />
        </div>
        <IconDistH className="ml-[3px]" />
        <div className="ml-[3px] w-[32px] h-[21px] rounded-[3px] border border-[#e8a020] bg-[linear-gradient(#fff3c8,#ffe9a0)] flex items-center">
          <IconSpacing className="ml-[2px]" />
          <div className="ml-[2px] w-px h-full bg-[#e8a020]" />
          <Arrow className="ml-[2px]" />
        </div>
        <Sep className="ml-[4px]" />
        <IconList className="ml-[6px]" />
        <Arrow className="ml-[4px]" />
        <IconBullets className="ml-[5px]" />
        <Arrow className="ml-[4px]" />
        <IconIndent flip className="ml-[4px]" />
        <IconIndent className="ml-[7px]" />
        <Sep className="ml-[7px]" />
        <IconHighlight className="ml-[5px]" />
        <Arrow className="ml-[4px]" />
        <IconAColor className="ml-[5px]" />
        <Arrow className="ml-[4px]" />
        <IconAGrow up className="ml-[5px]" />
        <IconAGrow className="ml-[7px]" />
        <IconX className="ml-[6px]" />
        <IconX sub className="ml-[6px]" />
        <Grip className="ml-[10px]" />
        <IconEditTable pen="#e87830" className="ml-[6px]" />
        <IconEditTable pen="#e8e8e8" className="ml-[6px]" />
        <Combo className="ml-[3px] w-[117px]" inner="w-[99px] justify-center">
          <div className="w-[79px] h-px bg-black" />
        </Combo>
      </div>

      {/* document tabs */}
      <div className="h-[30px] shrink-0 flex bg-[#d9d9d9] border-t border-[#bdbdbd]">
        <div className="ml-[3px] mt-px w-[239px] h-[28px] rounded-t-[3px] bg-[linear-gradient(#f4f4f4,#ffffff)] flex items-center pl-[6px] pr-[5px]">
          <DocBlue />
          <span className="ml-[3px] text-[12.250px] font-bold whitespace-nowrap">打火机金属外壳的...计说明书.doc</span>
          <svg width="9" height="9" viewBox="0 0 9 9" className="ml-auto">
            <path d="M1 1l7 7M8 1l-7 7" stroke="#777" strokeWidth="2" />
          </svg>
        </div>
        <div className="ml-[2px] mt-[4px] w-[35px] h-[21px] rounded-[3px] border border-[#bdbdbd] bg-[#e6e6e6] flex items-center">
          <svg width="13" height="13" viewBox="0 0 13 13" className="ml-[4px]">
            <path d="M5 0h3v5h5v3H8v5H5V8H0V5h5z" fill="#5a5a10" />
          </svg>
          <div className="ml-[4px] w-px h-full bg-[#c4c4c4]" />
          <Arrow className="ml-[3px]" />
        </div>
      </div>

      {/* document area */}
      <div className="flex-1 min-h-0 flex overflow-hidden">
        <div className="w-[279px] shrink-0 bg-[#929292] border-r-4 border-[#858585]" />
        <div className="flex-1 bg-white">
          <div className="ml-[119px] w-[577px]">
            <div className="h-[29px] flex items-center pl-[249px] text-[20px] tracking-[2px]">目录</div>
            {toc.map((row) => (
              <div
                key={row.num}
                className={`h-[29px] flex items-center text-[14px] tracking-[2.300px] ${row.sub ? "pl-[33px]" : ""}`}
              >
                <span className={`${row.numCls} ${row.track} shrink-0`}>{row.num}</span>
                <span className="whitespace-nowrap">{row.text}</span>
                <div className={`flex-1 min-w-0 mt-[9px] ml-[1px] mr-[3px] border-b border-dotted ${row.line}`} />
                <span className="tracking-normal text-[13px]">{row.page}</span>
              </div>
            ))}
          </div>
        </div>
      </div>

      {/* drawing toolbar */}
      <div className="h-[27px] shrink-0 flex bg-[#e3e3e3]">
        <div className={`w-[650px] h-[26px] flex items-center ${barBg}`}>
          <Grip className="ml-[4px]" />
          <span className="ml-[11px] w-[45px] whitespace-nowrap text-[12px]">
            绘图(<span className="underline">R</span>)
          </span>
          <Arrow className="ml-[9px]" />
          <IconCursor className="ml-[6px]" />
          <IconSelect className="ml-[5px]" />
          <Sep className="ml-[6px]" />
          <IconShapes className="ml-[7px]" />
          <Arrow className="ml-[4px]" />
          <IconLine className="ml-[5px]" />
          <IconArrowLine className="ml-[7px]" />
          <IconRect className="ml-[5px]" />
          <IconOval className="ml-[6px]" />
          <IconTextBox className="ml-[6px]" />
          <IconTextBox bars className="ml-[6px]" />
          <IconStar className="ml-[6px]" />
          <IconWordArt className="ml-[7px]" />
          <IconPic className="ml-[6px]" />
          <IconClip className="ml-[5px]" />
          <Sep className="ml-[6px]" />
          <IconFill className="ml-[5px]" />
          <ArrowOff className="ml-[6px]" />
          <IconPen className="ml-[5px]" />
          <ArrowOff className="ml-[4px]" />
          <IconALine className="ml-[5px]" />
          <Arrow className="ml-[4px]" />
          <IconLineStyle className="ml-[6px]" />
          <ArrowOff className="ml-[3px]" />
          <IconDash className="ml-[6px]" />
          <ArrowOff className="ml-[3px]" />
          <IconArrows className="ml-[6px]" />
          <ArrowOff className="ml-[3px]" />
          <IconShadow className="ml-[6px]" />
          <ArrowOff className="ml-[3px]" />
          <Icon3d className="ml-[5px]" />
          <ArrowOff className="ml-[4px]" />
        </div>
      </div>

      {/* status bar */}
      <div className="h-[21px] shrink-0 flex items-center bg-[#dcdcdc] border-t border-[#c4c4c4] text-[12px] text-[#111] whitespace-nowrap">
        <div className="w-[114px] h-full pl-[7px] flex items-center border-r border-[#bdbdbd]">
          <span className="w-[66px]">页面: 4/33</span>
          <span>节: 1/2</span>
        </div>
        <div className="w-[67px] h-full pl-[3px] flex items-center border-r border-[#bdbdbd]">
          <span className="w-[35px]">行: 1</span>
          <span>列: 1</span>
        </div>
        <div className="w-[78px] h-full pl-[8px] flex items-center border-r border-[#bdbdbd]">字数: 16620</div>
        <div className="w-[69px] h-full pl-[6px] flex items-center border-r border-[#bdbdbd]">
          <div className="w-[7px] h-[7px] rounded-full bg-[#4cc214] mr-[3px]" />
          拼写检查
        </div>
        <div className="w-[68px] h-full pl-[8px] flex items-center border-r border-[#bdbdbd]">单位: 毫米</div>
      </div>

      <WordCountDialog />
      <Watermark />
    </div>
  );
}
